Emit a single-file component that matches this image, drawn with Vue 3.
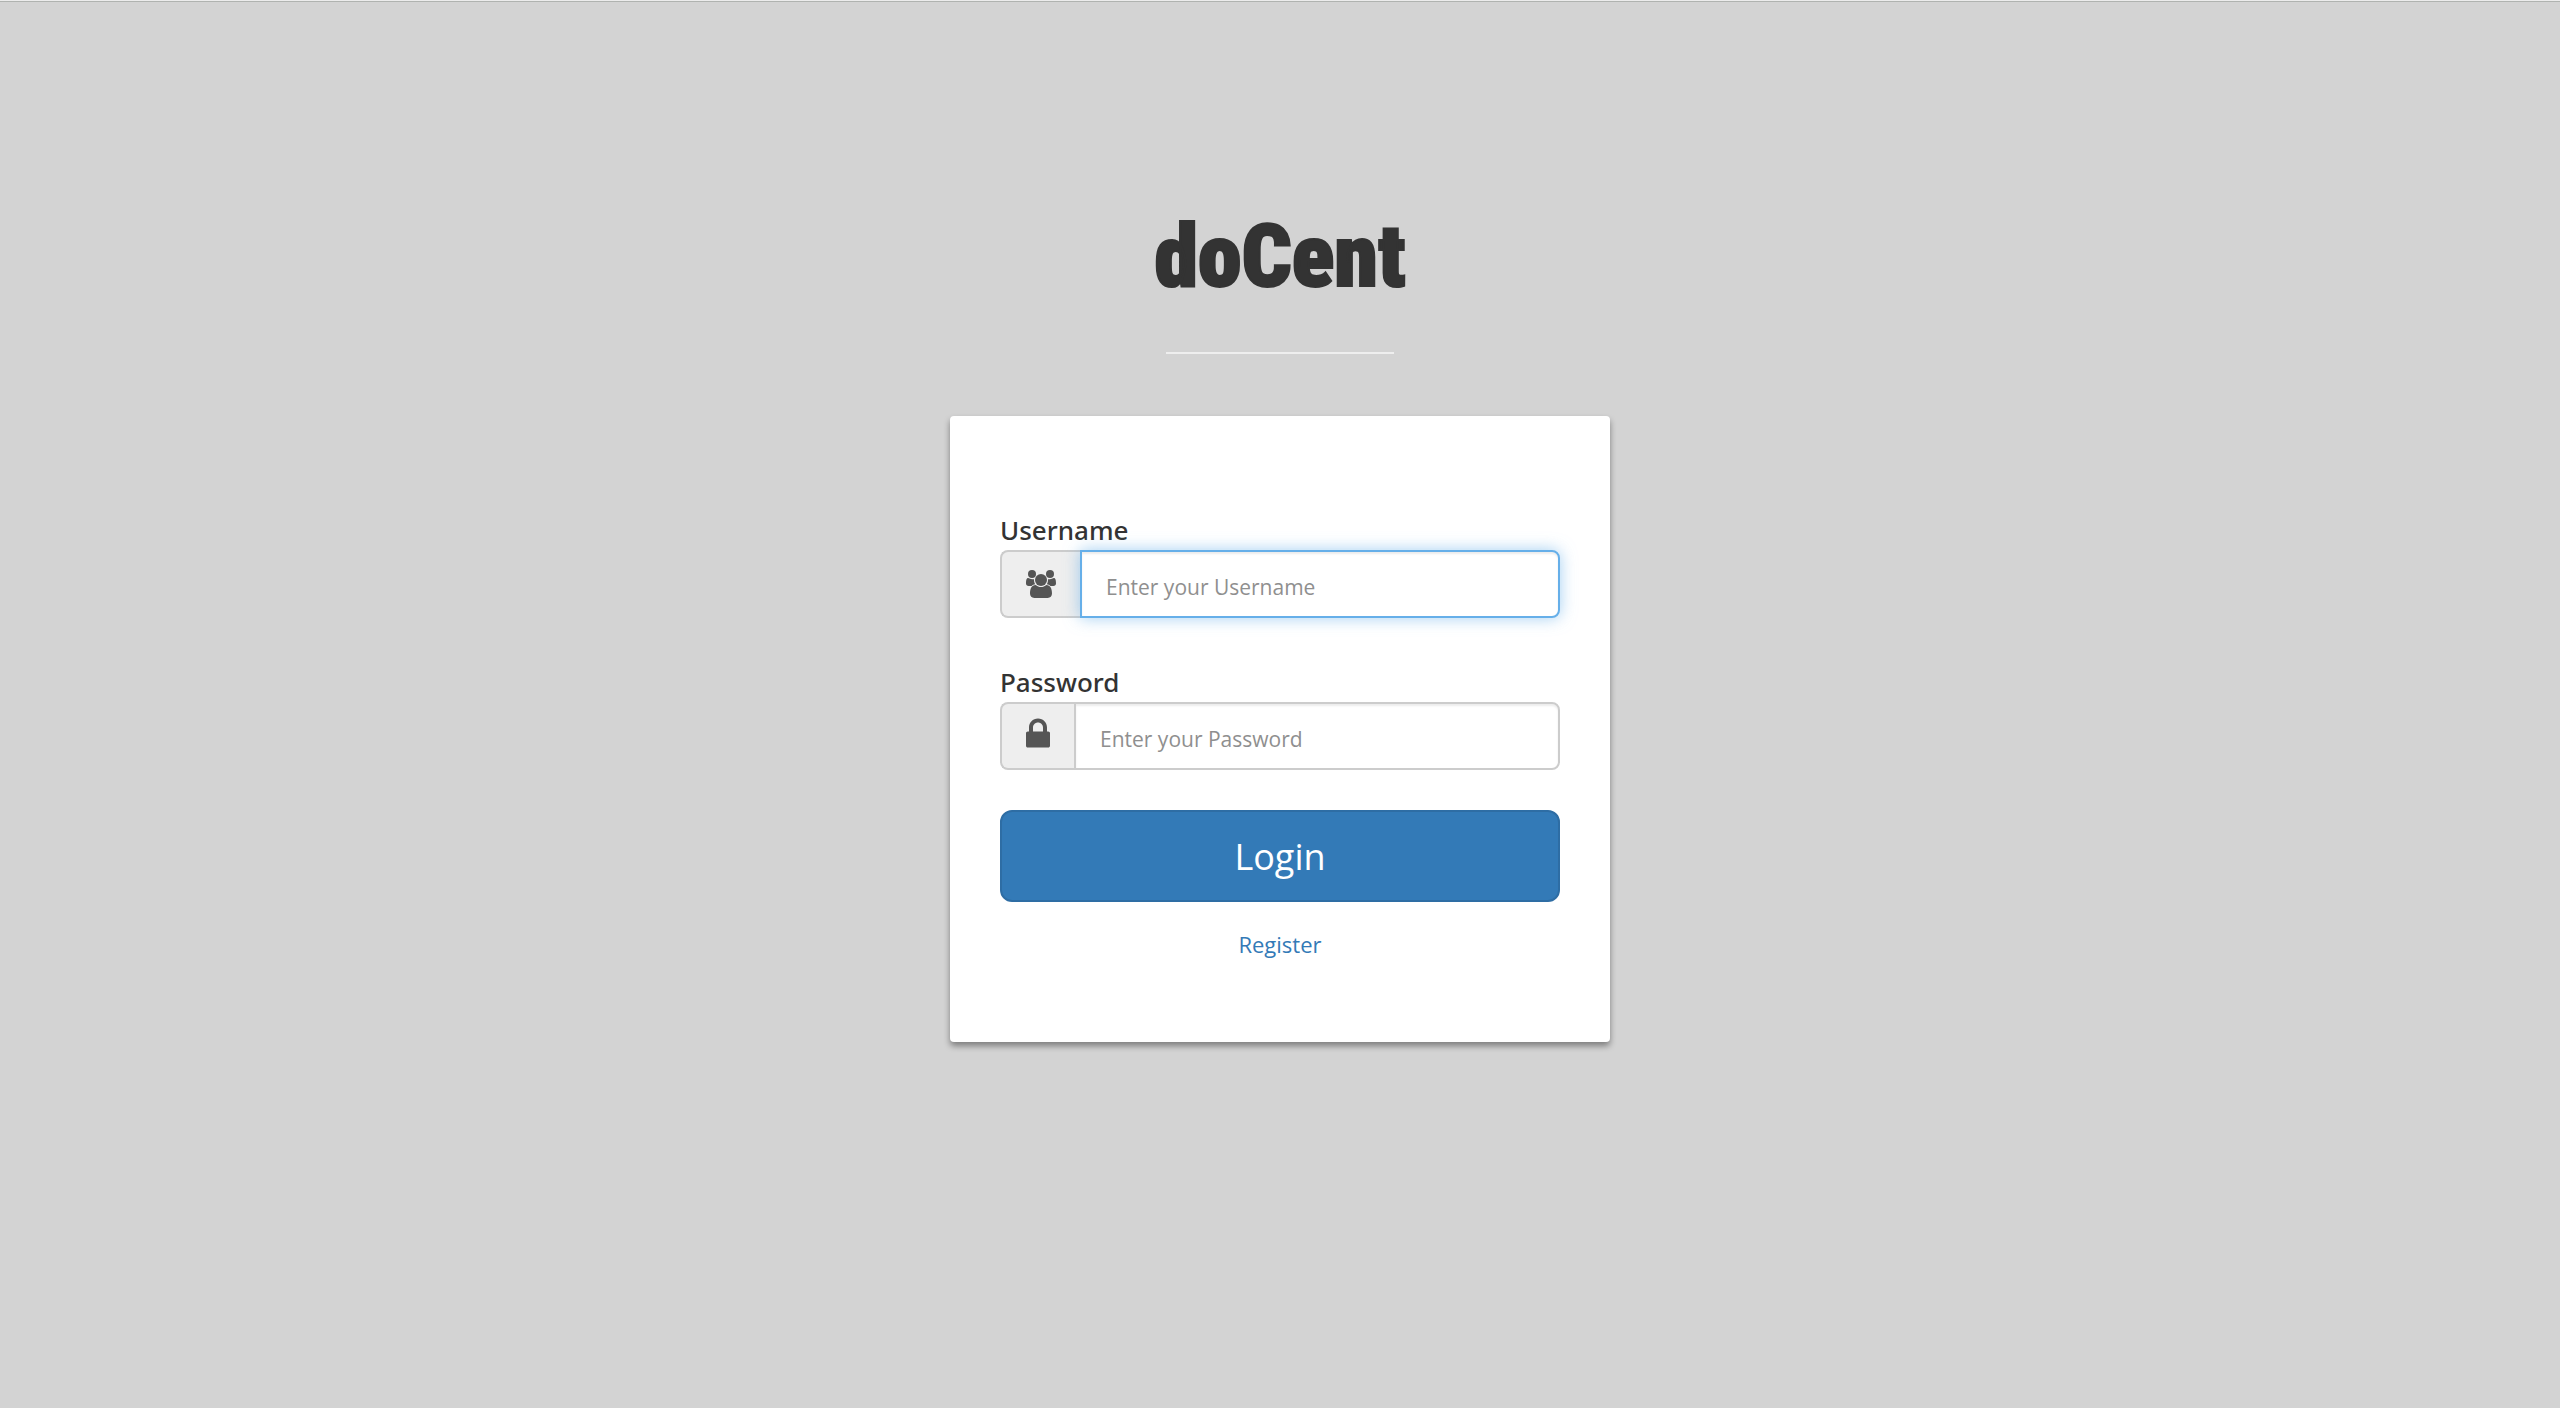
<script setup>
import { ref, onMounted } from 'vue'

const username = ref('')
const password = ref('')
const usernameField = ref(null)

onMounted(() => usernameField.value.focus())
</script>

<template>
  <main class="page">
    <header class="brand">
      <h1 class="title">doCent</h1>
      <hr class="rule" />
    </header>

    <form class="card" @submit.prevent>
      <div class="field">
        <label class="label" for="username">Username</label>
        <div class="group">
          <span class="addon">
            <svg class="icon" width="30" height="28" viewBox="0 0 30 28" aria-hidden="true">
              <circle cx="6" cy="4" r="4" />
              <circle cx="24" cy="4" r="4" />
              <path d="M2.200 8C.8 8 0 9.500 0 13.600 0 15 1 16 2.600 16H5.600C6.600 14.900 7.800 14.400 9.200 14.200 8.300 13 7.900 11.600 8 9.300 5.800 9.300 4 9 2.200 8Z" />
              <path d="M27.800 8C29.200 8 30 9.500 30 13.600 30 15 29 16 27.400 16H24.400C23.400 14.900 22.200 14.400 20.800 14.200 21.700 13 22.100 11.600 22 9.300 24.200 9.300 26 9 27.800 8Z" />
              <circle cx="15" cy="10" r="6" />
              <path d="M9.600 15C5.500 15 4 18.700 4 23.600 4 26.300 5.700 28 8.300 28H21.700C24.300 28 26 26.300 26 23.600 26 18.700 24.500 15 20.400 15 18.800 16.300 17 17.100 15 17.100S11.200 16.300 9.600 15Z" />
            </svg>
          </span>
          <input id="username" ref="usernameField" v-model="username" class="control" type="text" placeholder="Enter your Username" />
        </div>
      </div>

      <div class="field">
        <label class="label" for="password">Password</label>
        <div class="group">
          <span class="addon">
            <svg class="icon lock" width="24" height="30" viewBox="0 0 24 30" aria-hidden="true">
              <path d="M22.200 13.500H21V9.500C21 4.500 17.200.500 12 .500S3 4.500 3 9.500V13.500H1.800C.8 13.500 0 14.300 0 15.300V27.800C0 28.800.8 29.600 1.800 29.600H22.200C23.200 29.600 24 28.800 24 27.800V15.300C24 14.300 23.200 13.500 22.200 13.500ZM7 9.500C7 6.700 9.200 4.500 12 4.500S17 6.700 17 9.500V13.500H7Z" />
            </svg>
          </span>
          <input id="password" v-model="password" class="control" type="password" placeholder="Enter your Password" />
        </div>
      </div>

      <button class="login" type="submit">Login</button>
      <a class="register" href="#">Register</a>
    </form>
  </main>
</template>

<style>
html,
body {
  background: #d3d3d3;
}
</style>

<style scoped>
.page {
  display: flex;
  flex-direction: column;
  align-items: center;
  box-sizing: border-box;
  min-height: 100vh;
  border-top: 1px solid #ececec;
  box-shadow: inset 0 1px #b0b3b0;
  background: #d3d3d3;
  color: #333;
  font-family: "Open Sans", "Noto Sans", sans-serif;
}

.brand {
  display: flex;
  flex-direction: column;
  align-items: center;
  padding-top: 207px;
}

.title {
  margin: 0;
  font-family: "Roboto Condensed", "Roboto", sans-serif;
  font-size: 88px;
  font-weight: 900;
  line-height: 96px;
  -webkit-text-stroke: 2px #333;
}

.rule {
  width: 228px;
  height: 2px;
  margin: 48px 0 62px;
  border: 0;
  background: #eee;
}

.card {
  display: flex;
  flex-direction: column;
  box-sizing: border-box;
  width: 660px;
  max-width: 100%;
  padding: 96px 50px 82px;
  border-radius: 4px;
  background: #fff;
  box-shadow: 0 4px 6px rgba(0, 0, 0, 0.4);
}

.field {
  display: flex;
  flex-direction: column;
  margin-bottom: 46px;
}

.field + .field {
  margin-bottom: 40px;
}

.label {
  margin-bottom: 2px;
  font-family: "Noto Sans", "Open Sans", sans-serif;
  font-size: 26px;
  font-weight: 500;
  line-height: 36px;
}

.group {
  display: flex;
  height: 68px;
}

.addon {
  display: flex;
  align-items: center;
  padding: 0 24px;
  border: 2px solid #ccc;
  border-right: 0;
  border-radius: 8px 0 0 8px;
  background: #eee;
}

.icon {
  display: block;
  fill: #555;
}

.lock {
  margin-bottom: 6px;
}

.control {
  flex: 1;
  min-width: 0;
  box-sizing: border-box;
  padding: 6px 24px 0;
  border: 2px solid #ccc;
  border-radius: 0 8px 8px 0;
  outline: 0;
  background: #fff;
  box-shadow: inset 0 2px 2px rgba(0, 0, 0, 0.075);
  color: #555;
  caret-color: transparent;
  font: 21px "Open Sans", "Noto Sans", sans-serif;
}

.control::placeholder {
  color: #8f8f8f;
  opacity: 1;
}

.control:focus {
  border-color: #66afe9;
  box-shadow: inset 0 2px 2px rgba(0, 0, 0, 0.075), 0 0 16px rgba(102, 175, 233, 0.6);
}

.login {
  height: 92px;
  padding: 0;
  border: 2px solid #2e6da4;
  border-radius: 12px;
  background: #337ab7;
  color: #fff;
  font: 36px "Open Sans", "Noto Sans", sans-serif;
  cursor: pointer;
}

.register {
  align-self: center;
  margin-top: 26px;
  color: #337ab7;
  font-size: 22px;
  line-height: 32px;
  text-decoration: none;
}
</style>
